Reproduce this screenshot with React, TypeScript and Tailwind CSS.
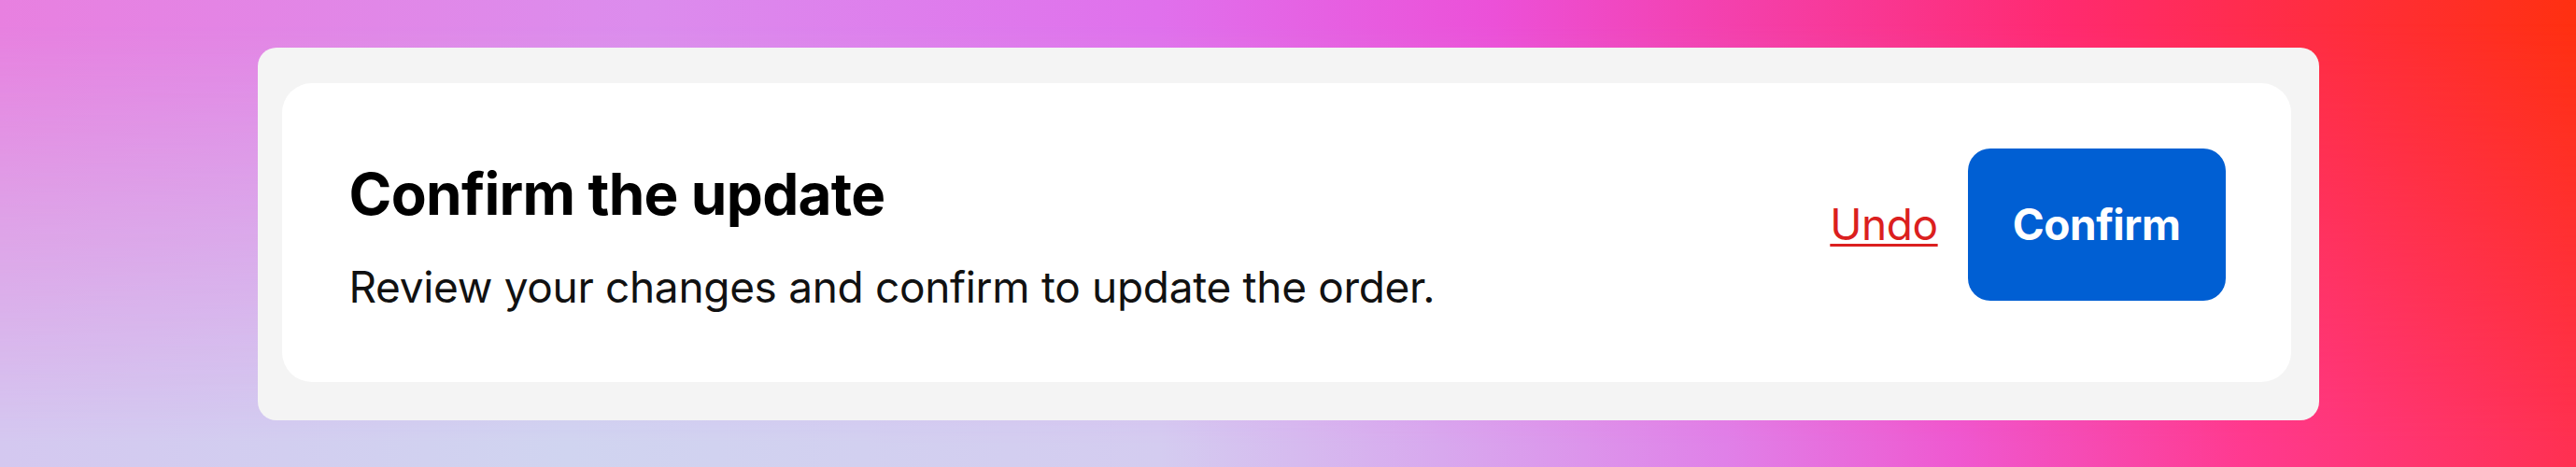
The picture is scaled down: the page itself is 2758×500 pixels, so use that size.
export default function App() {
  return (
    <div className="grid h-[500px] w-full font-['Inter','Noto_Sans',sans-serif]">
      {/* backdrop: top colours, then bottom colours faded in towards the bottom edge */}
      <div className="[grid-area:1/1] bg-[linear-gradient(to_right,#e880e0_0%,#dc8ced_25%,#e070ec_45%,#ec50d8_58%,#ff2a70_80%,#ff3010_100%)]" />
      <div className="[grid-area:1/1] bg-[linear-gradient(to_right,#d4c8f0_0%,#d0d4f0_22%,#d4ccf0_45%,#d8a8ee_56%,#e080e8_67%,#ef58d0_76%,#ff3a90_87%,#ff3050_100%)] [mask-image:linear-gradient(to_bottom,transparent_5%,black_95%)]" />

      <div className="relative z-10 [grid-area:1/1] flex items-center justify-center">
        <div className="h-[399px] w-[2207px] rounded-[20px] bg-[#f4f4f4] pl-[26px] pr-[30px] pt-[38px] pb-[41px]">
          <div className="flex h-[320px] items-start justify-between rounded-[32px] bg-white pl-[72px] pr-[70px] pt-[70px]">
            <div className="mt-[9px]">
              <h2 className="text-[62px] font-bold leading-[80px] tracking-[-0.011em] text-black">
                Confirm the update
              </h2>
              <p className="mt-[23px] text-[46px] leading-[72px] tracking-[-0.007em] text-[#111]">
                Review your changes and confirm to update the order.
              </p>
            </div>

            <div className="flex h-[163px] items-center gap-[32px]">
              <a className="text-[46px] leading-none tracking-[-0.01em] text-[#db1f1f] underline decoration-[3px] underline-offset-[4px]">
                Undo
              </a>
              <button className="h-[163px] rounded-[24px] bg-[#005fd3] px-[48px] text-[46px] font-bold tracking-[-0.01em] text-white">
                Confirm
              </button>
            </div>
          </div>
        </div>
      </div>
    </div>
  );
}
